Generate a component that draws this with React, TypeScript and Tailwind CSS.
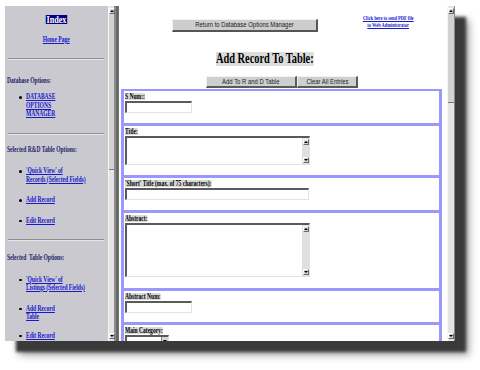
import React from "react"

// old frameset screenshot, text squeezed horizontally like the capture
const Sq = ({ children, className = "" }: { children: React.ReactNode; className?: string }) => (
  <span className={`inline-block align-top scale-x-[0.74] whitespace-nowrap ${className}`}>{children}</span>
)

const Arrow = ({ up }: { up?: boolean }) => (
  <div className="h-[6px] w-[6px] flex items-center justify-center bg-[#d6d6d6] border-r border-b border-[#6a6a6a] border-t border-l border-t-white border-l-white">
    {up ? (
      <span className="w-0 h-0 border-x-[2px] border-x-transparent border-b-[2px] border-b-black" />
    ) : (
      <span className="w-0 h-0 border-x-[2px] border-x-transparent border-t-[2px] border-t-black" />
    )}
  </div>
)

const Scrollbar = ({ thumb }: { thumb: string }) => (
  <div className="flex flex-col items-center w-full h-full bg-[#e4e4e4] border-l border-[#f6f6f6] border-r border-r-[#8a8a8a]">
    <div className="mt-[2px]">
      <Arrow up />
    </div>
    <div className={`${thumb} w-full bg-[#d2d2d2] border-b border-[#7a7a7a]`} />
    <div className="flex-1" />
    <div className="mb-[2px]">
      <Arrow />
    </div>
  </div>
)

const Hr = ({ className }: { className: string }) => (
  <div className={`${className} ml-[3px] mr-[4px] h-[2px] border-t border-[#8e8e94] border-b border-b-[#e6e6ea]`} />
)

const Item = ({ className, lines }: { className: string; lines: string[] }) => (
  <li className={`${className} flex items-start pl-[14px]`}>
    <span className="mt-[3px] mr-[4px] w-[2.5px] h-[2.5px] rounded-full bg-black shrink-0" />
    <Sq className="origin-left text-[#1818cc] underline">
      {lines.map((l, i) => (
        <React.Fragment key={i}>
          {i > 0 && <br />}
          {l}
        </React.Fragment>
      ))}
    </Sq>
  </li>
)

const Field = ({ w }: { w: string }) => (
  <div className={`${w} h-[12px] bg-white border-t-2 border-l-2 border-[#5a5a5a] border-b border-r border-b-[#e2e2e2] border-r-[#e2e2e2]`} />
)

const TextArea = ({ h }: { h: string }) => (
  <div className={`${h} w-[185px] flex bg-white border-t-2 border-l-2 border-[#5a5a5a] border-b border-r border-b-[#e2e2e2] border-r-[#e2e2e2]`}>
    <div className="flex-1" />
    <div className="w-[7px] bg-[#e0e0e0] flex flex-col justify-between items-center py-[1px]">
      <Arrow up />
      <Arrow />
    </div>
  </div>
)

const Label = ({ children }: { children: React.ReactNode }) => (
  <div className="h-[7px] leading-[7px]">
    <Sq className="origin-left bg-[#d8d8d8] text-black">{children}</Sq>
  </div>
)

const Row = ({ h, label, children }: { h: string; label: string; children: React.ReactNode }) => (
  <div className={`${h} pt-[2px] pl-[1px] border-b-[3px] border-[#9898ff]`}>
    <Label>{label}</Label>
    <div className="mt-[1px]">{children}</div>
  </div>
)

const Btn = ({ w, children }: { w: string; children: React.ReactNode }) => (
  <div className={`${w} h-[12px] flex items-center justify-center bg-[#cfcfcf] border-t border-l border-[#f2f2f2] border-b-2 border-r-2 border-b-[#5a5a5a] border-r-[#5a5a5a] text-[8px] leading-[8px] text-[#222] font-['Liberation_Sans',sans-serif]`}>
    <Sq className="origin-center">{children}</Sq>
  </div>
)

export default function App() {
  return (
    <div className="w-[480px] h-[370px] bg-white pt-[6px] pl-[5px] overflow-hidden">
      <div className="flex w-[450px] h-[335px] shadow-[11px_11px_3px_#3a3a3a,14px_14px_8px_#a0a0a0] font-['Liberation_Serif',serif] font-bold">
        {/* left frame */}
        <div className="w-[103px] h-full bg-[#c9c9cf] overflow-hidden text-[7.5px] leading-[8.5px]">
          <div className="mt-[9px] flex justify-center">
            <Sq className="origin-center">
              <span className="block bg-[#000080] text-white text-[11px] leading-[9px] h-[9px] px-[1px]">Index</span>
            </Sq>
          </div>
          <div className="mt-[12px] text-center">
            <Sq className="origin-center text-[#1818cc] underline">Home Page</Sq>
          </div>
          <Hr className="mt-[13px]" />
          <div className="mt-[17px] pl-[2px]">
            <Sq className="origin-left text-[#1e1e6a]">Database Options:</Sq>
          </div>
          <ul className="mt-[8px]">
            <Item className="" lines={["DATABASE", "OPTIONS", "MANAGER"]} />
          </ul>
          <Hr className="mt-[14px]" />
          <div className="mt-[11px] pl-[2px]">
            <Sq className="origin-left text-[#1e1e6a]">Selected R&amp;D Table Options:</Sq>
          </div>
          <ul>
            <Item className="mt-[13px]" lines={["'Quick View' of", "Records (Selected Fields)"]} />
            <Item className="mt-[12px]" lines={["Add Record"]} />
            <Item className="mt-[12px]" lines={["Edit Record"]} />
          </ul>
          <Hr className="mt-[14px]" />
          <div className="mt-[13px] pl-[2px]">
            <Sq className="origin-left text-[#1e1e6a]">Selected&nbsp; Table Options:</Sq>
          </div>
          <ul>
            <Item className="mt-[13px]" lines={["'Quick View' of", "Listings (Selected Fields)"]} />
            <Item className="mt-[12px]" lines={["Add Record", "Table"]} />
            <Item className="mt-[10px]" lines={["Edit Record"]} />
          </ul>
        </div>
        <div className="w-[7px] h-full">
          <Scrollbar thumb="h-[156px]" />
        </div>
        <div className="w-[4px] h-full bg-linear-to-r from-[#9c9c9c] via-[#5c5c5c] to-[#7a7a7a]" />

        {/* main frame */}
        <div className="w-[328px] h-full bg-white overflow-hidden text-[8px] leading-[8px]">
          <div className="flex items-start pt-[9px]">
            <div className="ml-[53px] mt-[4px]">
              <div className="w-[146px] h-[13px] flex items-center justify-center bg-[#cdcdcd] border-t border-l border-[#f2f2f2] border-b-2 border-r-2 border-b-[#555] border-r-[#555] text-[8px] leading-[8px] text-[#222] font-normal font-['Liberation_Sans',sans-serif]">
                <Sq className="origin-center">Return to Database Options Manager</Sq>
              </div>
            </div>
            <div className="ml-[44px] w-[53px] flex flex-col items-center text-[6px] leading-[7px] text-[#1818cc] underline">
              <Sq className="origin-center">Click here to send PDF file</Sq>
              <Sq className="origin-center">to Web Administrator</Sq>
            </div>
          </div>

          <div className="mt-[20px] pl-[97px] h-[14px]">
            <Sq className="origin-left bg-[#dcdcdc] text-black text-[14px] leading-[14px]">Add Record To Table:</Sq>
          </div>

          <div className="mt-[10px] pl-[87px] flex font-normal">
            <Btn w="w-[91px]">Add To R and D Table</Btn>
            <Btn w="w-[61px]">Clear All Entries</Btn>
          </div>

          <div className="mt-[1px] ml-[2px] w-[321px] border-t-2 border-x-[3px] border-[#9898ff] text-[7.5px]">
            <Row h="h-[35px]" label="S Num::">
              <Field w="w-[67px]" />
            </Row>
            <Row h="h-[52px]" label="Title:">
              <TextArea h="h-[29px]" />
            </Row>
            <Row h="h-[35px]" label="'Short' Title (max. of 75 characters):">
              <Field w="w-[184px]" />
            </Row>
            <Row h="h-[78px]" label="Abstract:">
              <TextArea h="h-[54px]" />
            </Row>
            <Row h="h-[34px]" label="Abstract Num:">
              <Field w="w-[67px]" />
            </Row>
            <Row h="h-[40px]" label="Main Category:">
              <div className="w-[44px] h-[10px] flex justify-end bg-white border-t-2 border-l-2 border-[#5a5a5a] border-b border-r border-b-[#e2e2e2] border-r-[#e2e2e2]">
                <div className="w-[7px] h-full flex items-center justify-center bg-[#d6d6d6] border-l border-[#888]">
                  <span className="w-0 h-0 border-x-[2px] border-x-transparent border-t-[2px] border-t-black" />
                </div>
              </div>
            </Row>
          </div>
        </div>
        <div className="w-[8px] h-full">
          <Scrollbar thumb="h-[89px]" />
        </div>
      </div>
    </div>
  )
}
